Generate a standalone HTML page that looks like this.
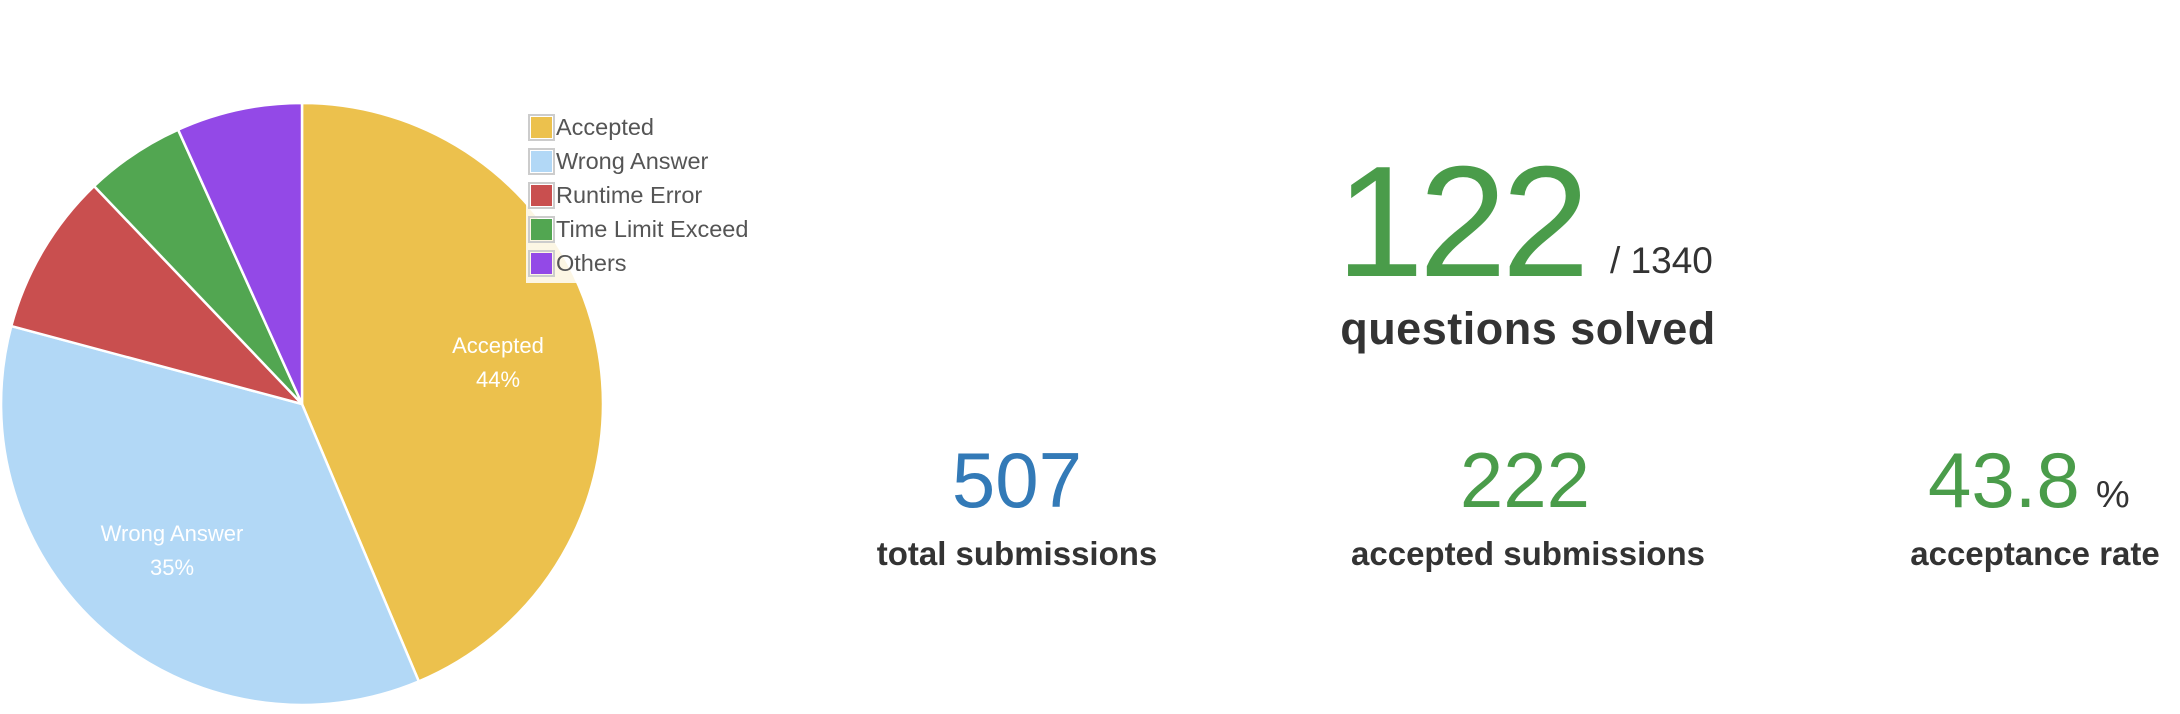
<!DOCTYPE html>
<html><head><meta charset="utf-8"><style>
body{margin:0;width:2180px;height:714px;background:#fff;position:relative;overflow:hidden;font-family:"Liberation Sans",Arial,sans-serif;}
.a{position:absolute;white-space:nowrap;}
.c{text-align:center;width:600px;}
.leg{position:absolute;left:526px;top:111px;width:230px;height:172px;background:rgba(255,255,255,0.85);}
.row{position:absolute;left:2px;height:27px;font-size:23.5px;color:#555;line-height:27px;}
.sq{display:inline-block;width:23px;height:23px;border:2px solid #ccc;vertical-align:top;margin-right:1px;box-sizing:content-box;}
.sq i{display:block;width:21px;height:21px;margin:1px;}
</style></head><body>
<svg class="a" style="left:0;top:0" width="800" height="714">
<g stroke="#fff" stroke-width="2.5" stroke-linejoin="round">
<path d="M302,404 L302,103 A301,301 0 0 1 418.8,681.4 Z" fill="#ecc14d"/>
<path d="M302,404 L418.8,681.4 A301,301 0 0 1 11.3,326.1 Z" fill="#b2d8f6"/>
<path d="M302,404 L11.3,326.1 A301,301 0 0 1 94.1,186.1 Z" fill="#c94f4f"/>
<path d="M302,404 L94.1,186.1 A301,301 0 0 1 178.1,129.7 Z" fill="#52a651"/>
<path d="M302,404 L178.1,129.7 A301,301 0 0 1 302,103 Z" fill="#9349e7"/>
</g>
<g fill="#fff" font-family="Liberation Sans, Arial, sans-serif" font-size="22" text-anchor="middle">
<text x="498" y="353">Accepted</text><text x="498" y="387">44%</text>
<text x="172" y="541">Wrong Answer</text><text x="172" y="575">35%</text>
</g>
</svg>
<div class="leg">
<div class="row" style="top:3px"><span class="sq"><i style="background:#ecc14d"></i></span>Accepted</div>
<div class="row" style="top:37px"><span class="sq"><i style="background:#b2d8f6"></i></span>Wrong Answer</div>
<div class="row" style="top:71px"><span class="sq"><i style="background:#c94f4f"></i></span>Runtime Error</div>
<div class="row" style="top:105px"><span class="sq"><i style="background:#52a651"></i></span>Time Limit Exceed</div>
<div class="row" style="top:139px"><span class="sq"><i style="background:#9349e7"></i></span>Others</div>
</div>

<div class="a" style="left:1336px;top:142px;font-size:158px;line-height:160px;color:#4a9c4a;letter-spacing:-5px">122</div>
<div class="a" style="left:1610px;top:241px;font-size:37px;line-height:40px;color:#333">/ 1340</div>
<div class="a c" style="left:1228px;top:303px;font-size:45px;line-height:52px;color:#333;font-weight:bold;letter-spacing:0.5px">questions solved</div>

<div class="a c" style="left:717px;top:438px;font-size:78px;line-height:84px;color:#337ab7">507</div>
<div class="a c" style="left:1225px;top:438px;font-size:78px;line-height:84px;color:#4a9c4a">222</div>
<div class="a" style="left:1928px;top:438px;font-size:78px;line-height:84px;color:#4a9c4a">43.8<span style="font-size:38px;color:#333;margin-left:16px">%</span></div>

<div class="a c" style="left:717px;top:536px;font-size:33px;line-height:36px;color:#333;font-weight:bold">total submissions</div>
<div class="a c" style="left:1228px;top:536px;font-size:33px;line-height:36px;color:#333;font-weight:bold">accepted submissions</div>
<div class="a c" style="left:1735px;top:536px;font-size:33px;line-height:36px;color:#333;font-weight:bold">acceptance rate</div>
</body></html>
